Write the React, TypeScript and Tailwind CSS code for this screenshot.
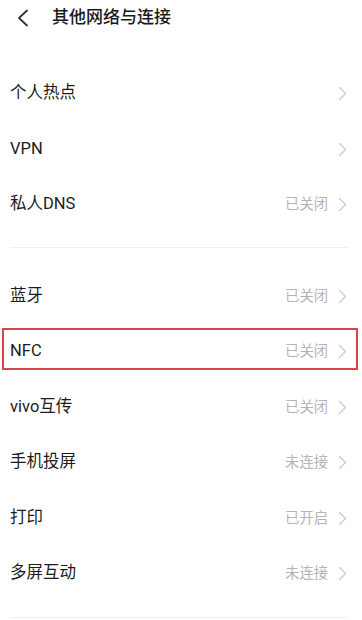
const Chevron = () => (
  <svg width="9" height="15" viewBox="0 0 9 15" fill="none" className="shrink-0">
    <path d="M1.5 1.5 L7.5 7.5 L1.5 13.5" stroke="#cbcbcb" strokeWidth="1.4" strokeLinecap="round" strokeLinejoin="round" />
  </svg>
);

type Item = { label: string; status?: string; marked?: boolean };

const group1: Item[] = [
  { label: '个人热点' },
  { label: 'VPN' },
  { label: '私人DNS', status: '已关闭' },
];

const group2: Item[] = [
  { label: '蓝牙', status: '已关闭' },
  { label: 'NFC', status: '已关闭', marked: true },
  { label: 'vivo互传', status: '已关闭' },
  { label: '手机投屏', status: '未连接' },
  { label: '打印', status: '已开启' },
  { label: '多屏互动', status: '未连接' },
];

const Row = ({ item }: { item: Item }) => (
  <div className="relative h-[55.5px] flex items-center justify-between pl-[10px] pr-[15px] pt-[4px]">
    <span className="text-[16.5px] text-[#1c1c1c]">{item.label}</span>
    <div className="flex items-center gap-[10px]">
      {item.status && <span className="text-[14.3px] text-[#b4b4b4]">{item.status}</span>}
      <Chevron />
    </div>
    {item.marked && (
      <div className="absolute left-[2px] right-[4px] top-[6px] h-[42px] border-2 border-[#d4454f]" />
    )}
  </div>
);

export default function App() {
  return (
    <div className="w-[362px] h-[620px] bg-white overflow-hidden" style={{ fontFamily: 'Roboto, "Noto Sans CJK SC", sans-serif' }}>
      <div className="h-[36px] flex items-center">
        <svg width="14" height="18" viewBox="0 0 14 18" fill="none" className="ml-[16px]">
          <path d="M11 1.5 L3 9 L11 16.5" stroke="#333" strokeWidth="1.8" strokeLinecap="round" strokeLinejoin="round" />
        </svg>
        <span className="ml-[22px] text-[17px] font-medium text-[#1a1a1a]">其他网络与连接</span>
      </div>
      <div className="mt-[28px]">
        {group1.map((it) => <Row key={it.label} item={it} />)}
      </div>
      <div className="ml-[10px] mr-[14px] mt-[16px] mb-[19px] h-px bg-[#efefef]" />
      <div>
        {group2.map((it) => <Row key={it.label} item={it} />)}
      </div>
      <div className="ml-[10px] mr-[14px] mt-[17px] h-px bg-[#efefef]" />
    </div>
  );
}
